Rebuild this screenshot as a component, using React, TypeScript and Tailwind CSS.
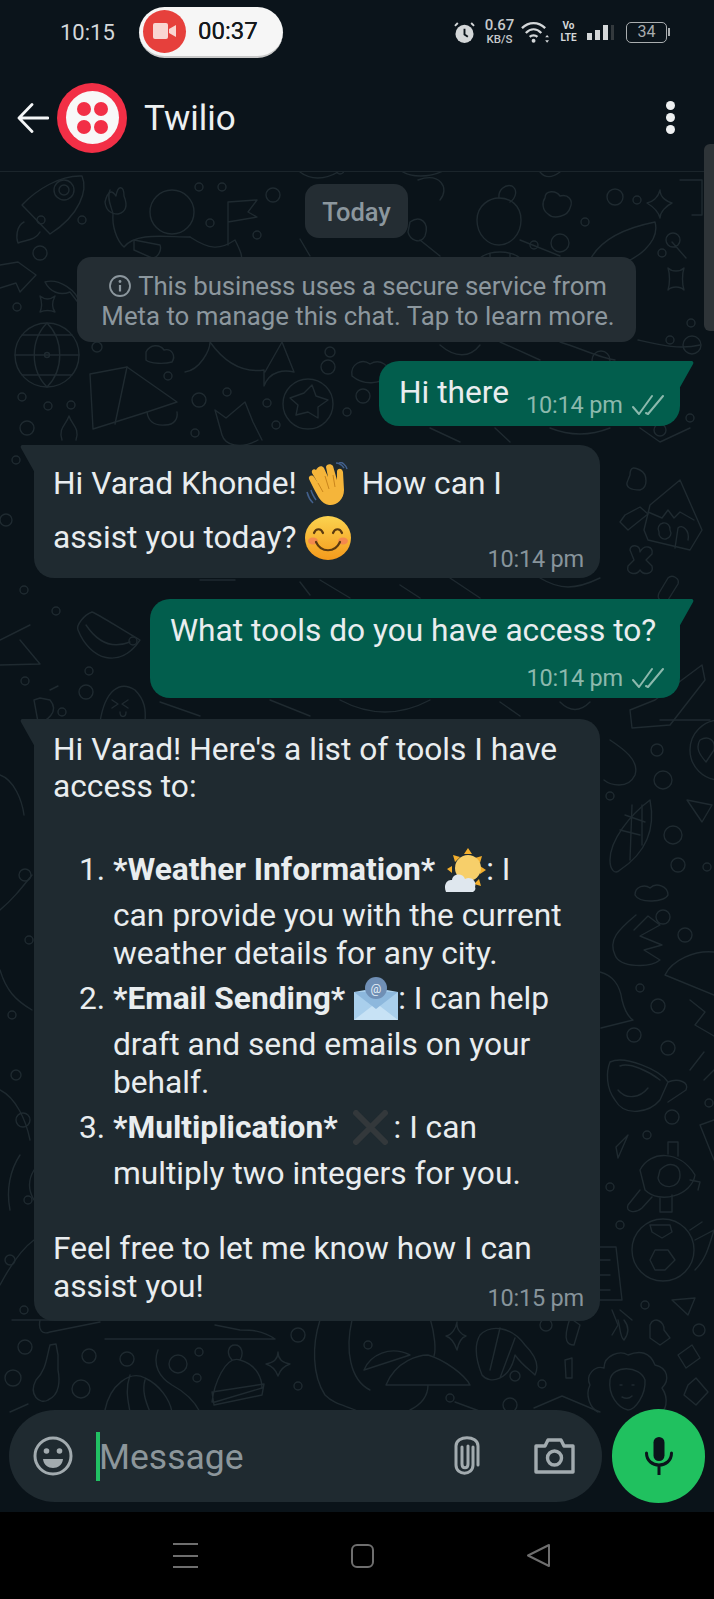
import type { ReactNode } from 'react'

const rings: [number, number, number][] = [
  [41, 220, 4], [82, 220, 4], [199, 187, 4], [222, 187, 4], [273, 195, 7], [210, 223, 4], [257, 235, 4], [40, 253, 7],
  [17, 307, 4], [97, 347, 5], [168, 376, 4], [22, 397, 4], [71, 405, 4], [48, 406, 4], [199, 400, 7], [227, 392, 4], [267, 403, 4],
  [27, 428, 7], [195, 433, 4], [276, 425, 4], [328, 367, 7], [363, 396, 7], [347, 412, 4], [560, 243, 9], [585, 222, 4], [534, 245, 4],
  [615, 197, 8], [637, 200, 4], [662, 253, 4], [691, 323, 4], [670, 340, 4], [601, 360, 9], [340, 170, 4],
  [650, 413, 6], [690, 418, 4], [420, 400, 4], [330, 352, 5], [692, 345, 9], [660, 430, 6],
  [16, 460, 4], [6, 520, 6], [24, 590, 4], [56, 611, 4], [133, 641, 4], [89, 671, 4], [25, 681, 4], [62, 712, 4], [86, 692, 7],
  [657, 750, 6], [663, 780, 9], [610, 796, 4], [673, 835, 9], [678, 865, 7], [707, 867, 4], [664, 652, 4],
  [663, 917, 7], [685, 935, 7], [640, 988, 4], [658, 1006, 7], [634, 1035, 7], [668, 1048, 7], [672, 1117, 7], [647, 1135, 4],
  [610, 1187, 4], [620, 1225, 4], [645, 1305, 4], [709, 1103, 4],
  [25, 875, 6], [29, 940, 4], [12, 1015, 4], [16, 1075, 5], [23, 1120, 7], [28, 1200, 4], [10, 1260, 5], [24, 1310, 4],
  [25, 1347, 7], [89, 1356, 7], [127, 1359, 7], [178, 1364, 9], [199, 1352, 4], [197, 1378, 4], [13, 1378, 8], [81, 1389, 9],
  [298, 1335, 7], [298, 1386, 4], [368, 1345, 4], [450, 1398, 4], [515, 1376, 5], [542, 1384, 4], [546, 1325, 6], [699, 1330, 6], [510, 1405, 7],
]

const lines = [
  'M22 205C36 190 60 175 82 176C88 190 80 215 50 234Z',
  'M24 222C16 226 16 238 18 243C26 240 36 240 40 232',
  'M110 190C106 198 112 208 113 214C112 225 116 240 124 247C136 232 165 237 190 237',
  'M105 202C108 190 112 190 116 196C118 184 124 186 124 196C128 206 126 212 118 214C110 214 106 210 105 202Z',
  'M228 245V202L257 200L248 212L257 217L228 222',
  'M190 237C210 250 220 250 235 240C240 250 244 258 240 262',
  'M134 240L160 245C162 250 158 258 152 258L134 250Z',
  'M0 265L18 262L36 275L20 292L16 283L0 288',
  'M45 282C58 278 78 290 80 305L70 292C60 296 50 292 45 282Z',
  'M40 296C45 300 50 300 55 296C52 302 52 308 55 312C50 310 45 310 40 312C42 308 42 302 40 296Z',
  'M15 355L79 355M22 335L72 335M22 375L72 375M47 323C30 340 30 370 47 387M47 323C64 340 64 370 47 387',
  'M90 374L127 367L177 402L147 412L93 429Z',
  'M127 367L115 424M147 412C148 420 152 426 165 425C175 425 178 418 177 412',
  'M62 440C58 428 66 425 69 416C72 425 80 428 76 440',
  'M215 410L226 418L245 402L253 422L262 440M215 410L222 435C225 445 240 450 258 440',
  'M304 393L312 385L316 396L328 400L318 407L318 418L308 412L296 415L298 405L290 398Z',
  'M146 352C150 344 160 344 164 350C172 348 176 356 172 362C165 364 150 364 146 360Z',
  'M352 376C350 364 362 358 370 364C380 358 392 366 388 376C380 384 364 386 352 376Z',
  'M185 372C200 370 210 350 210 342C230 370 250 372 264 370L264 386C270 370 285 370 294 372L282 342L265 372',
  'M477 220C477 205 490 198 499 198C510 198 521 205 521 220C521 235 510 245 499 245C488 245 477 235 477 220Z',
  'M499 198C498 190 505 184 512 186C518 190 516 198 510 202M480 258C490 250 510 250 520 258V280M490 254V280M510 254V280',
  'M545 198C545 190 556 190 560 196C568 194 574 200 570 208C568 216 554 220 548 214C542 210 542 202 545 198Z',
  'M660 190C660 198 668 202 672 203C666 206 660 212 660 218C658 210 652 206 647 203C652 202 658 198 660 190Z',
  'M590 260C600 240 625 228 655 222C660 240 640 262 605 268Z',
  'M672 242L686 258M680 240A7 7 0 1 0 666 240A7 7 0 1 0 680 240',
  'M668 268C672 272 680 272 684 268C682 274 682 284 684 290C680 286 672 286 668 290C670 284 670 274 668 268Z',
  'M680 180H702V215H692',
  'M410 222C420 215 430 222 425 236C420 245 410 240 408 232Z M418 180C440 172 450 188 440 200',
  'M625 515L640 507L648 514L628 530L620 522Z',
  'M630 550C630 544 640 544 640 552C644 544 654 546 652 554L646 560L652 566C654 574 644 576 640 570C636 576 626 574 628 566L634 560Z',
  'M630 475C630 465 636 468 640 470C648 474 648 488 640 490C632 490 624 488 628 480Z',
  'M644 530L650 505L680 480L702 530L690 550L648 540ZM648 512L662 518L668 510L674 518L680 512L694 520',
  'M659 532A6 6 0 1 0 670 530A6 6 0 1 0 659 532M675 548L678 528C682 524 690 530 688 540',
  'M659 593L668 578C672 574 680 578 678 584L668 600C662 602 656 600 659 593Z',
  'M655 700L702 665L705 680L670 725L632 728L630 710Z',
  'M610 740C622 748 640 760 635 775C628 790 610 785 604 780',
  'M660 720H710',
  'M700 740C708 735 716 740 714 750L706 762C700 755 695 748 700 740Z',
  'M610 860C610 840 630 815 650 800C655 825 650 850 620 870C615 875 610 870 610 860Z',
  'M620 830L640 835M625 815L645 822M632 805L630 860M642 805L642 845',
  'M687 800L712 805L702 822Z',
  'M636 915C618 930 608 940 615 955C620 968 650 968 660 960L644 950L662 945L640 936L660 925L648 916L634 930',
  'M635 895C635 886 645 884 650 888C656 882 668 886 668 895C665 902 640 904 635 895Z',
  'M600 972C612 975 620 985 622 1000C625 1012 630 1018 633 1020L601 1028',
  'M665 975C672 960 695 950 714 952M665 975L714 995',
  'M690 1000L705 1012L695 1025L714 1036',
  'M610 1062C625 1055 660 1070 668 1082L660 1100C650 1112 625 1118 615 1100C606 1088 606 1072 610 1062Z',
  'M620 1066C630 1062 650 1072 660 1080',
  'M618 1090C626 1100 640 1098 648 1088M668 1082C678 1078 690 1082 686 1090L668 1102',
  'M690 1070L704 1052M704 1080L714 1070',
  'M616 1147L628 1135L618 1158Z',
  'M640 1170C650 1150 680 1150 695 1175C692 1195 660 1205 645 1190Z',
  'M660 1170C670 1160 680 1165 680 1175C680 1190 660 1190 658 1178Z',
  'M640 1190L628 1205C625 1212 635 1214 642 1208L652 1197M660 1198V1212H672V1195M690 1180L700 1182L698 1190M668 1154V1142H678V1156',
  'M700 1125L714 1120M700 1125L714 1160',
  'M632 1250A31 31 0 1 0 694 1250A31 31 0 1 0 632 1250',
  'M650 1225H670L672 1232L662 1238L652 1232ZM655 1250L668 1250L675 1260L665 1270H655L650 1260Z',
  'M690 1230L702 1222M695 1240L714 1230C708 1250 705 1260 695 1270',
  'M672 1300L695 1298L688 1315Z',
  'M600 1247H616L622 1300H600M600 1260H610M600 1275H610M600 1290H610',
  'M612 1310L618 1325L612 1335M620 1310L632 1320',
  'M12 1320H60M105 1339H275M215 1325L240 1330C250 1330 262 1330 275 1339M40 1320C38 1330 42 1335 50 1332L100 1322',
  'M50 1345C46 1360 46 1370 36 1380C28 1395 40 1405 48 1400C60 1395 60 1380 58 1370L58 1355L56 1344Z M28 1404L10 1412',
  'M212 1402C214 1385 225 1355 240 1360C258 1365 262 1380 262 1388L215 1402ZM212 1392L264 1384L262 1395L214 1405ZM232 1360C226 1354 228 1345 235 1345C242 1345 244 1354 240 1360',
  'M278 1352C278 1360 284 1363 290 1364C284 1366 280 1370 278 1376C276 1370 272 1366 266 1364C272 1363 278 1360 278 1352Z',
  'M158 1350C152 1365 160 1378 172 1385C185 1392 195 1402 200 1412',
  'M105 1410C110 1385 130 1370 145 1378C160 1385 170 1400 172 1412M130 1375C125 1390 128 1400 130 1412M145 1380C142 1390 145 1400 150 1412',
  'M320 1320C312 1345 312 1375 325 1395C335 1405 345 1405 360 1412M352 1320C345 1350 350 1380 370 1390',
  'M364 1370C370 1355 390 1345 410 1355L364 1370Z',
  'M386 1385C396 1360 420 1355 428 1355C445 1360 465 1375 470 1385ZM428 1385C428 1398 420 1405 410 1410',
  'M430 1318C435 1335 436 1350 434 1356',
  'M457 1322C456 1330 462 1335 466 1336C460 1338 458 1345 457 1350C455 1344 452 1338 446 1336C452 1335 456 1328 457 1322Z',
  'M480 1335C490 1325 510 1325 525 1345C535 1355 540 1365 535 1375C530 1370 522 1365 515 1355C510 1380 490 1385 482 1375C476 1360 474 1345 480 1335ZM500 1328L490 1370M515 1338L500 1378',
  'M565 1360L572 1358L572 1378H566Z',
  'M590 1385C585 1375 595 1365 604 1368C604 1355 620 1350 628 1355C640 1350 650 1352 655 1365C668 1368 670 1380 662 1388C670 1400 665 1412 660 1412M590 1385C585 1395 590 1408 598 1412',
  'M610 1380C612 1365 640 1365 645 1380C646 1395 635 1410 628 1410C618 1408 608 1395 610 1380Z',
  'M620 1385H622M632 1385H634M622 1397C626 1399 630 1398 632 1396',
  'M570 1318L580 1325L574 1345C568 1345 562 1342 570 1318ZM618 1320C620 1326 620 1338 624 1340C630 1332 628 1325 624 1320M650 1325C654 1315 665 1322 664 1330L670 1338L660 1345L650 1338Z',
  'M678 1355L692 1345L700 1358L686 1368Z M688 1385L696 1378L708 1392L696 1405L684 1395Z',
  'M455 1402L482 1412M534 1408L562 1396L600 1412',
  'M78 630C90 660 120 670 140 640C122 630 100 615 92 612C84 615 76 625 78 630ZM86 625C96 640 110 650 130 642',
  'M0 640L30 625M0 665L40 664L20 640',
  'M100 722C105 690 120 680 135 690C145 700 146 710 145 722M112 700L118 704L112 708M128 700L122 704L128 708M120 712C120 718 126 718 126 712',
  'M40 698L50 700C60 712 46 722 38 722L34 700ZM50 690L58 686',
  'M200 580L235 580M300 582L310 595M320 580L350 598M400 585L420 598M450 578L480 598M540 578C560 590 575 590 600 578',
  'M160 702L200 716M270 700L310 716M340 700C370 716 400 716 430 700M500 702L520 716M560 702C570 712 580 712 590 702',
  'M0 775C14 780 22 800 24 815M32 875C20 890 12 900 0 910M32 1010C15 1000 6 990 0 970M0 1090C16 1098 26 1120 30 1140M20 1155C10 1170 6 1190 10 1210M34 1240C20 1250 8 1270 0 1285M34 1170C28 1180 28 1190 34 1200',
  'M400 170C410 178 430 178 445 170M300 172C310 180 325 180 338 172M540 172C545 178 552 178 560 172',
  'M300 239L310 256M420 240L440 256M520 240L560 256M638 340C660 345 680 350 700 345',
  'M500 342L540 360M560 342C580 348 600 358 615 360M440 345C455 358 470 358 480 345',
  'M495 428L510 442M430 428L460 442M550 428C570 436 590 436 610 428M640 428L660 442L690 428',
]

function Doodles() {
  return (
    <svg viewBox="0 172 714 1340" fill="none" stroke="#1f2a30" strokeWidth="1.4" strokeLinecap="round" strokeLinejoin="round" className="absolute inset-0 w-full h-full">
      {rings.map(([x, y, r], i) => <circle key={i} cx={x} cy={y} r={r} />)}
      {lines.map((d, i) => <path key={i} d={d} />)}
      <circle cx="172" cy="212" r="22" />
      <circle cx="64" cy="190" r="10" />
      <circle cx="64" cy="190" r="5" />
      <circle cx="47" cy="355" r="32" />
      <circle cx="308" cy="404" r="25" />
      <circle cx="720" cy="750" r="30" />
      <circle cx="47" cy="355" r="2.5" />
    </svg>
  )
}

function Checks() {
  return (
    <svg viewBox="0 0 32 22" className="w-[32px] h-[22px]" fill="none" stroke="#8cb9ad" strokeWidth="2" strokeLinecap="round" strokeLinejoin="round">
      <path d="M1 13l6 7L20 2" />
      <path d="M14 19l2 1L31 2" />
    </svg>
  )
}

function SentTail() {
  return (
    <svg viewBox="0 0 15 28" className="absolute top-0 -right-[14px] w-[15px] h-[28px]">
      <path d="M0 0H12C14.500 0 15 2 13.500 4L0 28Z" fill="#025e4d" />
    </svg>
  )
}

function ReceivedTail() {
  return (
    <svg viewBox="0 0 15 28" className="absolute top-0 -left-[14px] w-[15px] h-[28px]">
      <path d="M15 0H3C0.500 0 0 2 1.500 4L15 28Z" fill="#1f2a30" />
    </svg>
  )
}

function Time({ children }: { children: ReactNode }) {
  return <span className="text-[23.500px] leading-[28px] text-[#87949b] tracking-[-0.2px] whitespace-nowrap">{children}</span>
}

function SentTime() {
  return (
    <div className="flex items-center gap-[9px] text-[23.500px] leading-[28px] text-[#8cb9ad] tracking-[-0.2px] whitespace-nowrap">
      10:14 pm
      <Checks />
    </div>
  )
}

function Line({ h, className, children }: { h: number; className?: string; children: ReactNode }) {
  return <div className={`flex items-center whitespace-pre ${className ?? ''}`} style={{ height: h }}>{children}</div>
}

function WaveEmoji() {
  return (
    <svg viewBox="0 0 42 44" className="ml-[9px] mr-[14px] w-[42px] h-[44px] shrink-0">
      <path d="M10 8C12 4 16 3 18 6L22 15L20 5C20 2 25 1 27 4L31 18L31 9C32 6 36 6 37 10L38 28C38 38 30 44 23 43C15 42 12 34 8 27L3 17C2 14 6 12 8 15L12 21L6 11C5 8 8 6 10 8Z" fill="#f5b53a" />
      <path d="M12 21L17 30M19 14L23 27M27 13L29 25" stroke="#c9851c" strokeWidth="1" fill="none" />
      <path d="M1 30C2 34 4 38 7 41M5 28C6 32 8 35 10 38M30 1C33 1 36 3 38 6M33 0C36 0 40 3 41 7" stroke="#42608c" strokeWidth="1.500" fill="none" />
    </svg>
  )
}

function SmileEmoji() {
  return (
    <svg viewBox="0 0 46 44" className="ml-[9px] w-[46px] h-[44px] shrink-0">
      <defs>
        <linearGradient id="sm" x1="0" y1="0" x2="0" y2="1">
          <stop offset="0" stopColor="#fbd34f" />
          <stop offset="1" stopColor="#f49a1c" />
        </linearGradient>
      </defs>
      <ellipse cx="23" cy="22" rx="23" ry="22" fill="url(#sm)" />
      <ellipse cx="8" cy="25" rx="5" ry="3.500" fill="#f2785a" opacity="0.7" />
      <ellipse cx="38" cy="25" rx="5" ry="3.500" fill="#f2785a" opacity="0.7" />
      <path d="M9 17C11 12 16 12 18 17M28 17C30 12 35 12 37 17M11 26C16 37 30 37 35 26" stroke="#5b3a10" strokeWidth="2.200" fill="none" strokeLinecap="round" />
    </svg>
  )
}

function SunCloudEmoji() {
  return (
    <svg viewBox="0 0 42 44" className="ml-[9px] w-[42px] h-[44px] shrink-0">
      <path d="M24 0l4 6h-8zM38 8l-2 7-5-5zM42 22l-6 4v-8zM37 38l-7-2 5-5zM9 7l7 2-5 5zM3 21l5-3v7z" fill="#f3ae2c" />
      <circle cx="24" cy="20" r="13" fill="#f7cf6a" />
      <path d="M2 44C-1 37 3 31 8 32C9 25 19 25 21 31C27 28 33 33 31 39C32 41 31 43 29 44Z" fill="#dfe7ee" />
    </svg>
  )
}

function MailEmoji() {
  return (
    <svg viewBox="0 0 44 43" className="ml-[9px] w-[44px] h-[43px] shrink-0">
      <path d="M0 15L22 11L44 15V43H0Z" fill="#a9cfec" />
      <path d="M0 43L22 26L44 43Z" fill="#c7e2f5" />
      <path d="M0 15L22 32L44 15" fill="#8db8dd" />
      <circle cx="22" cy="11" r="11" fill="#6f8fb5" />
      <text x="22" y="15.500" textAnchor="middle" fontSize="12" fill="#e6f0f8" fontFamily="Roboto, sans-serif">@</text>
    </svg>
  )
}

function CrossEmoji() {
  return (
    <svg viewBox="0 0 37 35" className="ml-[14px] mr-[5px] w-[37px] h-[35px] shrink-0">
      <path d="M4 3L33 32M33 3L4 32" stroke="#33383b" strokeWidth="6" strokeLinecap="round" />
    </svg>
  )
}

function StatusBar() {
  return (
    <div className="h-[64px] flex items-center font-['Roboto',sans-serif]">
      <span className="ml-[60px] w-[79px] text-[22px] text-[#d5d8da]">10:15</span>
      <div className="w-[144px] h-[51px] rounded-full bg-[#f6f6f6] flex items-center pl-[4px] border-b-2 border-[#c9c9c9]">
        <div className="w-[43px] h-[43px] rounded-full bg-[#e6403c] flex items-center justify-center">
          <svg viewBox="0 0 24 18" className="w-[24px] h-[18px]" fill="#f9d6d2">
            <rect x="0" y="1" width="15" height="16" rx="2" />
            <path d="M16 7l7-4v12l-7-4z" />
          </svg>
        </div>
        <span className="ml-[12px] text-[24px] text-[#15191c] [text-shadow:0_0_0.5px_#15191c]">00:37</span>
      </div>
      <div className="ml-auto flex items-center text-[#c6cacc]">
        <svg viewBox="0 0 22 22" className="w-[21px] h-[21px]">
          <circle cx="11" cy="12.500" r="9.500" fill="#d4d7d9" />
          <path d="M11 7v6l3.500 2.500" stroke="#0b141b" strokeWidth="2" fill="none" />
          <path d="M1 4l3-3M21 4l-3-3" stroke="#d4d7d9" strokeWidth="2" />
        </svg>
        <div className="ml-[9px] w-[31px] flex flex-col items-center font-medium">
          <span className="text-[15px] leading-[15px]">0.67</span>
          <span className="text-[11.500px] leading-[13px]">KB/S</span>
        </div>
        <svg viewBox="0 0 30 24" className="ml-[6px] w-[29px] h-[24px]" fill="none" stroke="#d4d7d9" strokeWidth="2.400">
          <path d="M1 8C8 1 18 1 25 8M5 13C10 8 16 8 21 13M9 17C11 15 15 15 17 17" />
          <circle cx="13" cy="21" r="2" fill="#d4d7d9" stroke="none" />
          <path d="M27 15l-2 2.500h4zM27 23l-2-2.500h4z" fill="#d4d7d9" stroke="none" />
        </svg>
        <div className="ml-[11px] w-[15px] flex flex-col items-center font-bold text-[#d4d7d9]">
          <span className="text-[10px] leading-[12px]">Vo</span>
          <span className="text-[10px] leading-[12px]">LTE</span>
        </div>
        <div className="ml-[11px] flex items-end gap-[3px] h-[15px]">
          <div className="w-[5px] h-[7px] bg-[#d4d7d9]" />
          <div className="w-[5px] h-[10px] bg-[#d4d7d9]" />
          <div className="w-[5px] h-[15px] bg-[#d4d7d9]" />
          <div className="w-[3px] h-[15px] bg-[#33393d]" />
        </div>
        <div className="ml-[12px] w-[41px] h-[21px] rounded-[5px] border-[1.500px] border-[#a9adaf] flex items-center justify-center text-[16px] text-[#a9adaf]">
          34
        </div>
        <div className="ml-[1px] mr-[44px] w-[2px] h-[8px] bg-[#a9adaf]" />
      </div>
    </div>
  )
}

function Header() {
  return (
    <div className="h-[108px] flex items-center border-b border-[#1b252b] font-['Roboto',sans-serif]">
      <svg viewBox="0 0 32 30" className="ml-[17px] w-[32px] h-[30px]" fill="none" stroke="#f4f6f7" strokeWidth="2.800" strokeLinecap="round" strokeLinejoin="round">
        <path d="M31 15H2M15 1.500L2 15l13 13.500" />
      </svg>
      <div className="ml-[8px] w-[70px] h-[70px] rounded-full bg-[#f22f46] flex items-center justify-center">
        <div className="w-[53px] h-[53px] rounded-full bg-[#f8f8f8] grid grid-cols-[14px_14px] gap-x-[3px] gap-y-[4px] place-content-center">
          <div className="w-[14px] h-[14px] rounded-full bg-[#f22f46]" />
          <div className="w-[14px] h-[14px] rounded-full bg-[#f22f46]" />
          <div className="w-[14px] h-[14px] rounded-full bg-[#f22f46]" />
          <div className="w-[14px] h-[14px] rounded-full bg-[#f22f46]" />
        </div>
      </div>
      <span className="ml-[17px] pt-[4px] text-[35px] text-[#edf0f1]">Twilio</span>
      <div className="ml-auto mr-[39px] flex flex-col gap-[3px]">
        <div className="w-[9px] h-[9px] rounded-full bg-[#eef0f1]" />
        <div className="w-[9px] h-[9px] rounded-full bg-[#eef0f1]" />
        <div className="w-[9px] h-[9px] rounded-full bg-[#eef0f1]" />
      </div>
    </div>
  )
}

function InputBar() {
  return (
    <div className="relative mt-auto mb-[9px] ml-[9px] mr-[9px] flex items-center gap-[10px]">
      <div className="w-[593px] h-[92px] rounded-[46px] bg-[#1f2a30] flex items-center text-[#9aa3a8]">
        <svg viewBox="0 0 40 40" className="ml-[24px] w-[40px] h-[40px]" fill="none" stroke="#a2abaf" strokeWidth="3">
          <circle cx="20" cy="20" r="18" />
          <circle cx="13.500" cy="15" r="2.800" fill="#a2abaf" stroke="none" />
          <circle cx="26.500" cy="15" r="2.800" fill="#a2abaf" stroke="none" />
          <path d="M10 23H30C29 35 11 35 10 23Z" fill="#a2abaf" stroke="none" />
        </svg>
        <div className="ml-[23px] w-[4px] h-[49px] bg-[#21c063]" />
        <span className="-ml-[1px] pt-[4px] text-[35.500px] text-[#8c969b]">Message</span>
        <svg viewBox="0 0 26 40" className="ml-auto w-[26px] h-[40px]" fill="none" stroke="#a2abaf" strokeWidth="3" strokeLinecap="round">
          <path d="M19 11V29C19 40 2 40 2 29V10C2 -1 24 -1 24 10V29M8 11V28C8 33 14 33 14 28V10" />
        </svg>
        <svg viewBox="0 0 41 36" className="ml-[54px] mr-[27px] w-[41px] h-[36px]" fill="none" stroke="#a2abaf" strokeWidth="3.400" strokeLinejoin="round">
          <path d="M2 8H11L14 2H27L30 8H39V34H2Z" />
          <circle cx="20.500" cy="20" r="7" />
        </svg>
      </div>
      <div className="w-[93px] h-[94px] rounded-full bg-[#20c15f] flex items-center justify-center">
        <svg viewBox="0 0 28 38" className="w-[28px] h-[38px]" fill="none" stroke="#0b141b" strokeWidth="3" strokeLinecap="round">
          <rect x="8.500" y="0" width="11" height="24" rx="5.500" fill="#0b141b" stroke="none" />
          <path d="M1.500 16C1.500 32 26.500 32 26.500 16M14 28V38" />
        </svg>
      </div>
    </div>
  )
}

export default function App() {
  return (
    <div className="w-[714px] h-[1599px] flex flex-col bg-black overflow-hidden font-['Roboto',sans-serif] text-[#e9edef]">
      <div className="bg-[#0b141b]">
        <StatusBar />
        <Header />
      </div>

      <main className="relative flex-1 flex flex-col bg-[#0a1319]">
        <Doodles />
        <div className="absolute -top-[28px] right-0 w-[10px] h-[187px] rounded-l-[6px] bg-[#2e3438]" />

        {/* Today + notice */}
        <div className="relative mt-[12px] self-center w-[103px] h-[54px] ml-[-1px] pt-[3px] rounded-[14px] bg-[#242d33] flex items-center justify-center text-[25.500px] font-medium text-[#8c979e]">
          Today
        </div>
        <div className="relative mt-[19px] ml-[77px] w-[559px] h-[85px] pt-[3px] pl-[3px] rounded-[14px] bg-[#242d33] flex flex-col items-center justify-center text-[25.800px] leading-[30px] text-[#8c979e]">
          <div className="flex items-center gap-[7px] tracking-[-0.1px]">
            <svg viewBox="0 0 22 22" className="w-[22px] h-[22px]" fill="none" stroke="#8c979e" strokeWidth="1.800">
              <circle cx="11" cy="11" r="10" />
              <path d="M11 10v6.500" strokeWidth="2.200" />
              <circle cx="11" cy="6.500" r="1.400" fill="#8c979e" stroke="none" />
            </svg>
            This business uses a secure service from
          </div>
          <div>Meta to manage this chat. Tap to learn more.</div>
        </div>

        {/* Messages */}
        <div className="relative mt-[19px] self-end mr-[34px] w-[301px] h-[65px] rounded-[20px] rounded-tr-none bg-[#025e4d] flex items-center pl-[20px]">
          <SentTail />
          <span className="text-[31.700px] -mt-[1px]">Hi there</span>
          <div className="ml-[17px] mt-[23px]"><SentTime /></div>
        </div>

        <div className="relative mt-[19px] ml-[34px] w-[566px] h-[133px] rounded-[20px] rounded-tl-none bg-[#1f2a30] pl-[19px] pt-[15px] text-[31.700px]">
          <ReceivedTail />
          <Line h={48}>Hi Varad Khonde!<WaveEmoji />How can I</Line>
          <Line h={59}>assist you today?<SmileEmoji /></Line>
          <div className="flex justify-end pr-[16px] -mt-[22px]"><Time>10:14 pm</Time></div>
        </div>

        <div className="relative mt-[21px] self-end mr-[34px] w-[530px] h-[99px] rounded-[20px] rounded-tr-none bg-[#025e4d] pl-[20px] pt-[13px]">
          <SentTail />
          <div className="text-[31.700px] leading-[38px]">What tools do you have access to?</div>
          <div className="flex justify-end pr-[16px] mt-[14px]"><SentTime /></div>
        </div>

        <div className="relative mt-[21px] ml-[34px] w-[566px] h-[602px] rounded-[20px] rounded-tl-none bg-[#1f2a30] pl-[19px] pt-[12px] text-[31.700px]">
          <ReceivedTail />
          <Line h={38}>Hi Varad! Here's a list of tools I have</Line>
          <Line h={36}>access to:</Line>
          <div className="mt-[38px] ml-[26px] grid grid-cols-[34px_1fr]">
            <span className="leading-[53px]">1.</span>
            <div>
              <Line h={53}><b className="font-bold">*Weather Information*</b><SunCloudEmoji />: I</Line>
              <Line h={39}>can provide you with the current</Line>
              <Line h={37}>weather details for any city.</Line>
            </div>
            <span className="leading-[53px]">2.</span>
            <div>
              <Line h={53}><b className="font-bold">*Email Sending*</b><MailEmoji />: I can help</Line>
              <Line h={39}>draft and send emails on your</Line>
              <Line h={37}>behalf.</Line>
            </div>
            <span className="leading-[53px]">3.</span>
            <div>
              <Line h={53}><b className="font-bold">*Multiplication*</b><CrossEmoji />: I can</Line>
              <Line h={39}>multiply two integers for you.</Line>
            </div>
          </div>
          <Line h={38} className="mt-[37px]">Feel free to let me know how I can</Line>
          <Line h={38}>assist you!</Line>
          <div className="flex justify-end pr-[16px] -mt-[22px]"><Time>10:15 pm</Time></div>
        </div>

        <InputBar />
      </main>

      {/* Nav bar */}
      <nav className="h-[87px] bg-black flex items-center">
        <div className="ml-[173px] w-[25px] h-[25px] flex flex-col justify-between">
          <div className="h-[2px] bg-[#6e6e6e]" />
          <div className="h-[2px] bg-[#6e6e6e]" />
          <div className="h-[2px] bg-[#6e6e6e]" />
        </div>
        <div className="ml-[153px] w-[23px] h-[24px] rounded-[6px] border-2 border-[#6e6e6e]" />
        <svg viewBox="0 0 25 25" className="ml-[152px] w-[25px] h-[25px]" fill="none" stroke="#6e6e6e" strokeWidth="2" strokeLinejoin="round">
          <path d="M23 2V23L2 12.500Z" />
        </svg>
      </nav>
    </div>
  )
}
